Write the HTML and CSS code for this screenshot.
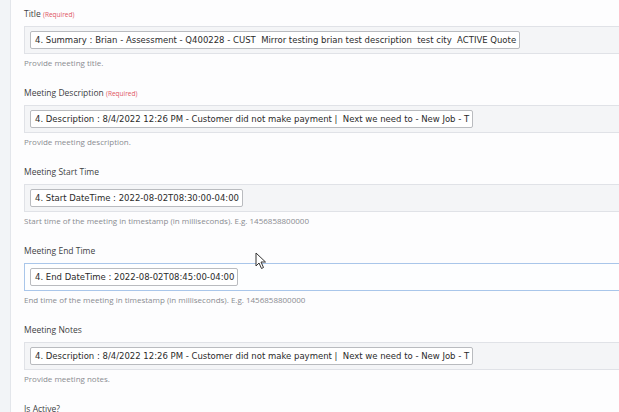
FILE: index.html
```html
<!DOCTYPE html>
<html lang="en">
<head>
  <meta charset="UTF-8" />
  <title>Meeting Fields</title>
  <link rel="stylesheet" href="styles.css">
</head>
<body>
  <aside class="rail"></aside>

  <main class="form">
    <div class="field">
      <label>Title <span class="req">(Required)</span></label>
      <div class="box">
        <span class="chip">4. Summary : Brian - Assessment - Q400228 - CUST&nbsp; Mirror testing brian test description&nbsp; test city&nbsp; ACTIVE Quote</span>
      </div>
      <p class="help">Provide meeting title.</p>
    </div>

    <div class="field">
      <label>Meeting Description <span class="req">(Required)</span></label>
      <div class="box">
        <span class="chip">4. Description : 8/4/2022 12:26 PM - Customer did not make payment |&nbsp; Next we need to - New Job - T</span>
      </div>
      <p class="help">Provide meeting description.</p>
    </div>

    <div class="field">
      <label>Meeting Start Time</label>
      <div class="box">
        <span class="chip">4. Start DateTime : 2022-08-02T08:30:00-04:00</span>
      </div>
      <p class="help">Start time of the meeting in timestamp (in milliseconds). E.g. 1456858800000</p>
    </div>

    <div class="field">
      <label>Meeting End Time</label>
      <div class="box focused">
        <span class="chip">4. End DateTime : 2022-08-02T08:45:00-04:00</span>
      </div>
      <p class="help">End time of the meeting in timestamp (in milliseconds). E.g. 1456858800000</p>
    </div>

    <div class="field">
      <label>Meeting Notes</label>
      <div class="box">
        <span class="chip">4. Description : 8/4/2022 12:26 PM - Customer did not make payment |&nbsp; Next we need to - New Job - T</span>
      </div>
      <p class="help">Provide meeting notes.</p>
    </div>

    <div class="field last">
      <label>Is Active?</label>
    </div>
  </main>

  <!-- mouse pointer -->
  <svg class="pointer" width="12" height="18" viewBox="0 0 12 18">
    <path d="M1 1 L1 14 L4 11 L6.5 16.5 L8.5 15.5 L6 10 L10.5 10 Z" fill="#fff" stroke="#333" stroke-width="1"/>
  </svg>
</body>
</html>
```

FILE: styles.css
```css
body {
  margin: 0;
  background: #fdfdfe;
  font-family: "Open Sans", Arial, sans-serif;
  display: flex;
  height: 412px;
  overflow: hidden;
  position: relative;
}

.rail {
  width: 10px;
  flex-shrink: 0;
  background: #f2f4f7;
  border-right: 1px solid #e3e6eb;
}

.form {
  flex: 1;
  padding: 8px 0 0 13px;
}

.field {
  height: 79px;
}

.field.last {
  height: 10px;
  overflow: visible;
}

label {
  display: block;
  height: 12px;
  line-height: 12px;
  font-size: 8.5px;
  color: #3d3f44;
  margin-bottom: 6px;
}

.req {
  font-size: 6.5px;
  color: #e0555f;
}

.box {
  height: 26px;
  margin-right: -4px;
  background: #f4f5f7;
  border: 1px solid #e0e2e7;
  display: flex;
  align-items: center;
  padding-left: 5px;
}

.box.focused {
  background: #fdfeff;
  border-color: #a9c6ea;
}

.chip {
  display: inline-block;
  height: 16px;
  line-height: 16px;
  padding: 0 3px 0 4px;
  background: #fff;
  border: 1px solid #b9bbbf;
  border-radius: 2px;
  font-family: "DejaVu Sans", Tahoma, sans-serif;
  font-size: 8.5px;
  color: #2b2b2b;
  white-space: nowrap;
}

.help {
  margin: 3px 0 0;
  height: 12px;
  line-height: 12px;
  font-size: 8px;
  color: #8a8c91;
}

.pointer {
  position: absolute;
  left: 255px;
  top: 252px;
}
```
